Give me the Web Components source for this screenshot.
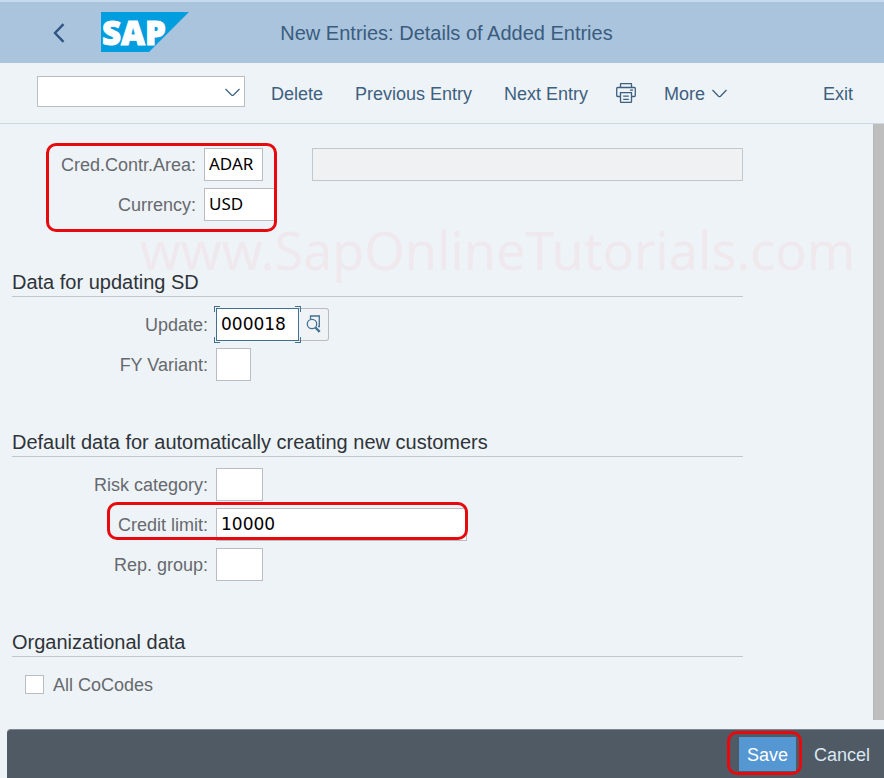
<!DOCTYPE html>
<html lang="en">
<head>
<meta charset="utf-8">
<title>New Entries: Details of Added Entries</title>
<style>
  html, body { margin: 0; }
  body {
    font-family: "Liberation Sans", Arial, sans-serif;
    font-size: 18px;
    background: #eef3f8;
    --line: #c0c7cd;
    --field-line: #b9bcc0;
    --ink: #3d607f;
    --mark: #e60a0f;
  }
</style>
</head>
<body>
<entry-page></entry-page>
<script>
const define = (name, html, setup) => {
  customElements.define(name, class extends HTMLElement {
    constructor() {
      super();
      const t = document.createElement('template');
      t.innerHTML = '<style>*{box-sizing:border-box}</style>' + html;
      this.attachShadow({ mode: 'open' }).append(t.content.cloneNode(true));
    }
    connectedCallback() { if (setup) setup(this, this.shadowRoot); }
  });
};

define('sap-logo', `
<style>:host{display:block;flex:none;margin-bottom:2px} svg{display:block;overflow:visible}</style>
<svg width="88" height="40" viewBox="0 0 88 40" role="img" aria-label="SAP">
  <path d="M0 0H88L48 40H0Z" fill="#009ddf"/>
  <text x="1" y="33" fill="#fff" stroke="#fff" font-family="Open Sans, sans-serif" font-weight="800" font-size="33">SAP</text>
</svg>`);

define('shell-header', `
<style>
:host{display:flex;align-items:center;height:63px;border-top:2px solid #c6daee;background:#aac4dd;padding-left:44px}
button{border:0;background:none;padding:0;width:30px;height:30px;display:grid;place-items:center;margin-right:27px}
h1{flex:1;margin:0;padding-right:180px;text-align:center;font-size:20px;line-height:24px;font-weight:400;color:#3a5c7d}
</style>
<button aria-label="Back"><svg width="12" height="20" viewBox="0 0 12 20" fill="none" stroke="#2f5682" stroke-width="2.4"><path d="M10.5 1.2 2 10l8.500 8.800"/></svg></button>
<sap-logo></sap-logo>
<h1><slot></slot></h1>`);

define('tool-button', `
<style>
:host{display:block;flex:none}
button{border:0;background:none;padding:0;margin:0;font:inherit;line-height:24px;color:var(--ink);display:flex;align-items:center;gap:7px}
</style>
<button><slot></slot></button>`, (host, root) => {
  const label = host.getAttribute('label');
  if (label) root.querySelector('button').setAttribute('aria-label', label);
});

define('command-box', `
<style>
:host{display:block;position:relative;width:208px;height:31px;flex:none}
select{appearance:none;width:100%;height:100%;border:1px solid var(--field-line);border-radius:0;background:#fff;font:inherit;padding:0 24px 0 5px}
svg{position:absolute;right:5px;top:12px;pointer-events:none}
</style>
<select aria-label="Command"><option></option></select>
<svg width="15" height="9" viewBox="0 0 15 9" fill="none" stroke="#3d607f" stroke-width="1.2"><path d="M.5 1 6.500 7q1 .8 2 0L14.500 1"/></svg>`);

define('tool-bar', `
<style>
:host{display:flex;align-items:center;height:61px;border-bottom:1px solid #cdd8e2;padding:2px 31px 0 37px;gap:32px}
command-box{margin:0 -6px 6px 0}
.end{margin-left:auto}
svg{display:block}
.print{margin:0 -4px 2px}
.more{margin-bottom:2px}
</style>
<command-box></command-box>
<tool-button>Delete</tool-button>
<tool-button>Previous Entry</tool-button>
<tool-button>Next Entry</tool-button>
<tool-button class="print" label="Print"><svg width="20" height="20" viewBox="0 0 20 20" fill="none" stroke="#3d607f" stroke-width="1.300"><path d="M4.500 4.500V1q0-.4.500-.4h10q.5 0 .5.400v3.500M4.500 13.500H1.600q-.9 0-.9-.9V5.400q0-.9.9-.9h16.800q.9 0 .9.900v7.200q0 .9-.9.900h-2.900M14 7.200h3M4.500 9.600h11v9.200q0 .6-.6.600H5.100q-.6 0-.6-.6zM7.200 13.200h5.600M7.200 16.300h5.600"/></svg></tool-button>
<tool-button>More<svg class="more" width="15" height="9" viewBox="0 0 15 9" fill="none" stroke="#3d607f" stroke-width="1.300"><path d="M.5 1 6.500 7.200q1 .8 2 0L14.500 1"/></svg></tool-button>
<tool-button class="end">Exit</tool-button>`);

define('form-field', `
<style>
:host{display:grid;grid-template-columns:var(--label,196px) auto 1fr;align-items:center;column-gap:8px;height:40px}
label{text-align:right;color:#66696d;line-height:24px;padding-top:1px}
.box{position:relative;display:flex}
input{height:33px;border:1px solid var(--field-line);border-radius:0;background:#fff;color:#000;padding:0 4px 2px;margin:0;font:17px "Noto Sans",sans-serif;outline:0}
:host([numeric]) input{font-family:"DejaVu Sans",sans-serif;padding-bottom:0}
:host([active]) input{border-color:#44708f}
i,button{display:none}
:host([active]) i{display:block;position:absolute;width:6px;height:6px;border:0 solid #44708f}
.tl{left:-2px;top:-2px;border-width:1px 0 0 1px!important}
.bl{left:-2px;bottom:-2px;border-width:0 0 1px 1px!important}
.tr{right:28px;top:-2px;border-width:1px 1px 0 0!important}
.br{right:28px;bottom:-2px;border-width:0 1px 1px 0!important}
:host([active]) button{display:grid;place-items:center;width:30px;height:33px;padding:0;border:1px solid var(--field-line);border-left:0;border-radius:0 3px 3px 0;background:#f0f3f6}
</style>
<label for="f"></label>
<div class="box"><input id="f"><button aria-label="Value help"><svg width="16" height="18" viewBox="0 0 16 18" fill="none" stroke="#44708f" stroke-width="1.300"><path d="M4.500 4V1h8.800v10.500H12"/><circle cx="6" cy="9" r="4.700"/><path d="m9.400 12.500 4.300 4.300" stroke-width="2.400"/></svg></button><i class="tl"></i><i class="bl"></i><i class="tr"></i><i class="br"></i></div>
<slot></slot>`, (host, root) => {
  root.querySelector('label').textContent = host.getAttribute('label');
  const input = root.querySelector('input');
  input.value = host.getAttribute('value') || '';
  input.style.width = host.getAttribute('width') + 'px';
});

define('text-output', `
<style>
:host{display:block;margin-left:41px}
input{display:block;width:100%;height:33px;border:1px solid var(--line);border-radius:0;background:#f0f1f3;padding:0 4px;font:inherit}
</style>
<input readonly aria-label="Credit control area name">`);

define('form-section', `
<style>
:host{display:block;margin-top:40px}
h2{margin:0 0 7px;padding:4px 0 0;height:33px;border-bottom:1px solid var(--line);font-size:20px;line-height:28px;font-weight:400;color:#2f3439}
</style>
<h2></h2><slot></slot>`, (host, root) => {
  root.querySelector('h2').textContent = host.getAttribute('heading');
});

define('check-field', `
<style>
:host{display:block}
label{display:flex;align-items:center;gap:9px;height:40px;padding:1px 0 0 13px;color:#66696d;line-height:24px}
input{appearance:none;margin:0;width:19px;height:19px;border:1px solid var(--field-line);background:#fff}
</style>
<label><input type="checkbox"><slot></slot></label>`);

/* Red outline laid over the controls that need attention. */
define('red-mark', `
<style>
:host{position:absolute;border:3px solid var(--mark);border-radius:10px;pointer-events:none}
</style>`);

define('water-mark', `
<style>
:host{position:absolute;left:140px;top:100px;font:52px/52px "Noto Sans",sans-serif;color:#efe8ed;white-space:nowrap;pointer-events:none}
</style><slot></slot>`);

define('action-bar', `
<style>
:host{display:flex;align-items:center;justify-content:flex-end;gap:18px;height:49px;margin:9px 0 0 7px;padding-right:14px;border-top:1px solid #7d8791;border-radius:4px 0 0 0;background:#4f5a65}
div{position:relative}
button{display:block;border:0;margin:0;padding:2px 0 0;font:inherit;line-height:24px;height:34px;color:#dbe8f4;background:none}
.save{width:57px;background:#5497d2;color:#fff}
red-mark{left:-12px;top:-6px;width:75px;height:44px}
</style>
<div><button class="save">Save</button><red-mark></red-mark></div>
<button>Cancel</button>`);

define('entry-page', `
<style>
:host{display:flex;flex-direction:column;min-height:100vh}
main{flex:1;display:flex}
form{flex:1;position:relative;padding:20px 130px 16px 12px}
.bar{width:11px;background:#bebebe;border-left:1px solid #b4b8bc}
.group{position:relative}
.head{--label:184px}
.m1{left:34px;top:-1px;width:231px;height:89px}
.m2{left:95px;top:-2px;width:361px;height:38px}
</style>
<shell-header>New Entries: Details of Added Entries</shell-header>
<tool-bar></tool-bar>
<main>
<form>
  <water-mark>www.SapOnlineTutorials.com</water-mark>
  <div class="group head">
    <form-field label="Cred.Contr.Area:" value="ADAR" width="59"><text-output></text-output></form-field>
    <form-field label="Currency:" value="USD" width="71"></form-field>
    <red-mark class="m1"></red-mark>
  </div>
  <form-section heading="Data for updating SD">
    <form-field label="Update:" value="000018" width="83" numeric active></form-field>
    <form-field label="FY Variant:" width="35"></form-field>
  </form-section>
  <form-section heading="Default data for automatically creating new customers">
    <form-field label="Risk category:" width="47"></form-field>
    <div class="group">
      <form-field label="Credit limit:" value="10000" width="251" numeric></form-field>
      <red-mark class="m2"></red-mark>
    </div>
    <form-field label="Rep. group:" width="47"></form-field>
  </form-section>
  <form-section heading="Organizational data">
    <check-field>All CoCodes</check-field>
  </form-section>
</form>
<div class="bar"></div>
</main>
<action-bar></action-bar>`);
</script>
</body>
</html>
